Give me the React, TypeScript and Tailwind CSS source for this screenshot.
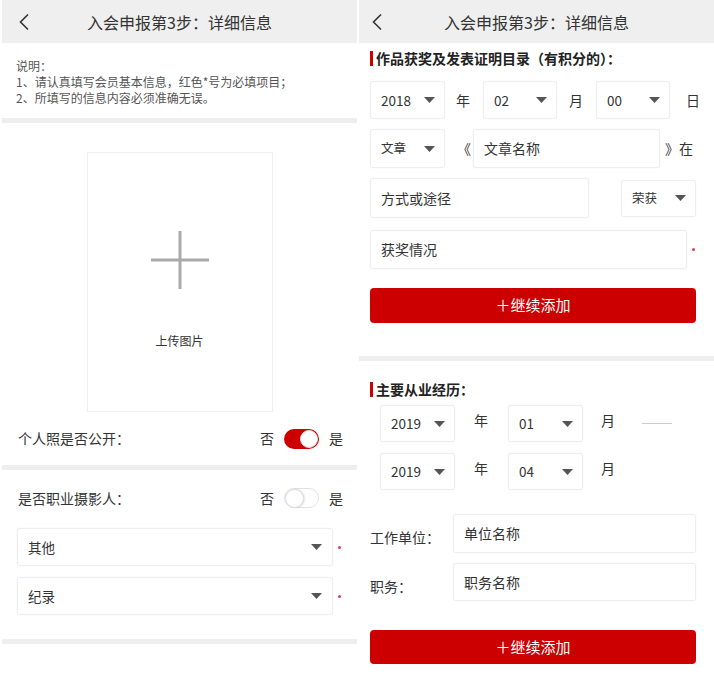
import React from "react";

const Chevron = () => (
  <svg width="12" height="18" viewBox="0 0 12 18" fill="none">
    <path d="M10 1.5 L2.5 9 L10 16.5" stroke="#333" strokeWidth="1.6" />
  </svg>
);

const Caret = () => (
  <svg width="11" height="6" viewBox="0 0 11 6">
    <path d="M0 0 H11 L5.5 6 Z" fill="#555" />
  </svg>
);

const Header = ({ left }: { left: string }) => (
  <div className="flex h-[43px] items-center bg-[#efefef]">
    <div className={`flex w-[44px] ${left}`}>
      <Chevron />
    </div>
    <div className="flex-1 text-center text-[16px] text-[#333]">入会申报第3步：详细信息</div>
    <div className="w-[44px]" />
  </div>
);

const Select = ({ value, className, text = "text-[13.5px]" }: { value: string; className: string; text?: string }) => (
  <div
    className={`flex shrink-0 items-center justify-between rounded-[3px] border border-[#eeeeee] bg-white pl-[10px] pr-[9px] shadow-[0_0_2px_rgba(0,0,0,0.05)] ${className}`}
  >
    <span className={`${text} text-[#333]`}>{value}</span>
    <Caret />
  </div>
);

const Input = ({ value, className }: { value: string; className: string }) => (
  <div
    className={`flex items-center rounded-[3px] border border-[#eeeeee] bg-white px-[10px] text-[14px] text-[#333] shadow-[0_0_2px_rgba(0,0,0,0.05)] ${className}`}
  >
    {value}
  </div>
);

const Toggle = ({ on }: { on: boolean }) =>
  on ? (
    <div className="flex h-[20px] w-[35px] items-center justify-end rounded-full bg-[#cc0000] pr-[1px]">
      <div className="h-[18px] w-[18px] rounded-full border border-[#ddd] bg-white" />
    </div>
  ) : (
    <div className="flex h-[20px] w-[35px] items-center rounded-full border border-[#e2e2e2] bg-white">
      <div className="h-[19px] w-[19px] rounded-full border border-[#ddd] bg-white shadow-[1px_0_2px_rgba(0,0,0,0.12)]" />
    </div>
  );

const Dot = () => <div className="ml-[5px] h-[3px] w-[3px] shrink-0 rounded-full bg-[#d04055]" />;

const SectionTitle = ({ title, className }: { title: string; className: string }) => (
  <div className={`flex h-[16px] items-center ${className}`}>
    <div className="mr-[3px] h-[15px] w-[3px] bg-[#cc0000]" />
    <span className="text-[14px] font-bold text-[#222]">{title}</span>
  </div>
);

const AddButton = ({ className }: { className: string }) => (
  <div
    className={`flex items-center justify-center rounded-[4px] bg-[#cc0000] text-[15px] text-white ${className}`}
  >
    ＋继续添加
  </div>
);

export default function App() {
  return (
    <div className="flex h-[686px] w-[714px] overflow-hidden bg-white font-['Noto_Sans_CJK_SC',sans-serif]">
      {/* 左侧 */}
      <div className="ml-[2px] flex w-[355px] shrink-0 flex-col">
        <Header left="pl-[16px]" />
        <div className="px-[14px] pt-[15px] text-[12px] leading-[16px] text-[#555]">
          <p>说明：</p>
          <p>1、请认真填写会员基本信息，红色*号为必填项目；</p>
          <p>2、所填写的信息内容必须准确无误。</p>
        </div>
        <div className="mt-[12px] h-[5px] bg-[#eeeeee]" />
        <div className="mx-auto mt-[29px] flex h-[260px] w-[186px] flex-col items-center border border-[#efefef]">
          <svg className="mt-[78px]" width="58" height="58" viewBox="0 0 58 58">
            <path d="M29 0 V58 M0 29 H58" stroke="#aaaaaa" strokeWidth="3" />
          </svg>
          <span className="mt-[43px] text-[12px] text-[#333]">上传图片</span>
        </div>
        <div className="flex h-[53px] items-center justify-between pl-[16px] pr-[14px] text-[14px] text-[#333]">
          <span>个人照是否公开：</span>
          <div className="flex items-center gap-[10px]">
            <span>否</span>
            <Toggle on />
            <span>是</span>
          </div>
        </div>
        <div className="h-[5px] bg-[#eeeeee]" />
        <div className="mt-[5px] flex h-[46px] items-center justify-between pl-[16px] pr-[14px] text-[14px] text-[#333]">
          <span>是否职业摄影人：</span>
          <div className="flex items-center gap-[10px]">
            <span>否</span>
            <Toggle on={false} />
            <span>是</span>
          </div>
        </div>
        <div className="mt-[7px] flex items-center pl-[15px]">
          <Select value="其他" className="h-[38px] w-[316px] pr-[10px]" />
          <Dot />
        </div>
        <div className="mt-[11px] flex items-center pl-[15px]">
          <Select value="纪录" className="h-[38px] w-[316px] pr-[10px]" />
          <Dot />
        </div>
        <div className="mt-[24px] h-[5px] bg-[#eeeeee]" />
      </div>

      {/* 右侧 */}
      <div className="ml-[2px] flex min-w-0 flex-1 flex-col">
        <Header left="pl-[12px]" />
        <div className="flex flex-col pl-[11px] pr-[18px] text-[14px] text-[#333]">
          <SectionTitle title="作品获奖及发表证明目录（有积分的）：" className="mt-[7px]" />

          <div className="mt-[15px] flex h-[38px] items-center">
            <Select value="2018" className="h-full w-[75px]" />
            <span className="ml-[11px] w-[27px] shrink-0">年</span>
            <Select value="02" className="h-full w-[74px]" />
            <span className="ml-[12px] w-[27px] shrink-0">月</span>
            <Select value="00" className="h-full w-[74px]" />
            <span className="ml-[16px] shrink-0">日</span>
          </div>

          <div className="mt-[10px] flex h-[39px] items-center">
            <Select value="文章" className="h-full w-[75px]" text="text-[12.5px]" />
            <span className="ml-[12px] w-[16px] shrink-0">《</span>
            <Input value="文章名称" className="h-full w-[187px] shrink-0" />
            <span className="ml-[5px] shrink-0">》在</span>
          </div>

          <div className="mt-[10px] flex h-[40px] items-center justify-between">
            <Input value="方式或途径" className="h-full w-[219px]" />
            <Select value="荣获" className="h-[37px] w-[75px]" text="text-[12.5px]" />
          </div>

          <div className="mt-[12px] flex h-[39px] items-center">
            <Input value="获奖情况" className="h-full w-[317px]" />
            <Dot />
          </div>

          <AddButton className="mt-[19px] h-[35px]" />
        </div>

        <div className="mt-[33px] h-[5px] bg-[#eeeeee]" />

        <div className="flex flex-col pl-[11px] pr-[18px] text-[14px] text-[#333]">
          <SectionTitle title="主要从业经历：" className="mt-[20px]" />

          <div className="mt-[8px] flex h-[37px] items-center pl-[10px]">
            <Select value="2019" className="h-full w-[75px]" />
            <span className="mb-[6px] ml-[19px] w-[34px] shrink-0">年</span>
            <Select value="01" className="h-full w-[75px]" />
            <span className="mb-[6px] ml-[18px] w-[34px] shrink-0">月</span>
            <div className="ml-[7px] h-px w-[30px] shrink-0 bg-[#ccc]" />
          </div>

          <div className="mt-[11px] flex h-[37px] items-center pl-[10px]">
            <Select value="2019" className="h-full w-[75px]" />
            <span className="mb-[6px] ml-[19px] w-[34px] shrink-0">年</span>
            <Select value="04" className="h-full w-[75px]" />
            <span className="mb-[6px] ml-[18px] w-[34px] shrink-0">月</span>
          </div>

          <div className="mt-[24px] flex h-[39px] items-center">
            <span className="mt-[8px] w-[83px] shrink-0">工作单位：</span>
            <Input value="单位名称" className="h-full flex-1" />
          </div>

          <div className="mt-[10px] flex h-[38px] items-center">
            <span className="mt-[8px] w-[83px] shrink-0">职务：</span>
            <Input value="职务名称" className="h-full flex-1" />
          </div>

          <AddButton className="mt-[29px] h-[34px]" />
        </div>
      </div>
    </div>
  );
}
